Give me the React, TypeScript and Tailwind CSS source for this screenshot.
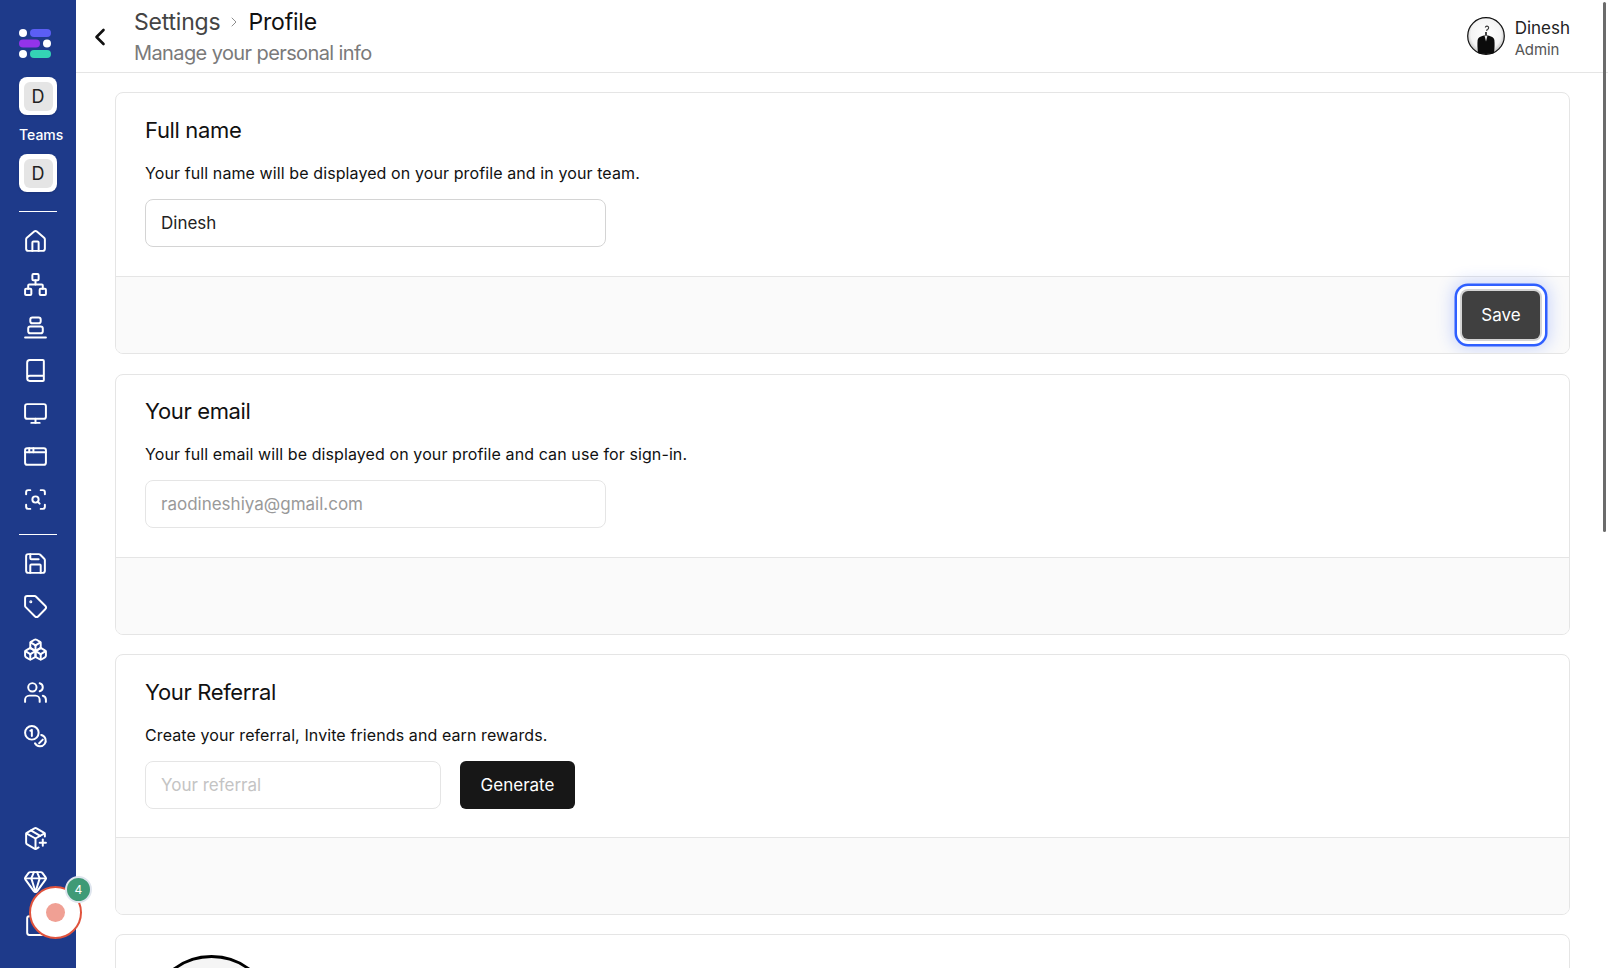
import { ReactNode } from "react";
import {
  AppWindow,
  Book,
  Boxes,
  ChevronLeft,
  ChevronRight,
  Clipboard,
  Gem,
  House,
  Monitor,
  Network,
  PackagePlus,
  Save,
  ScanSearch,
  Tag,
  Users,
} from "lucide-react";

const font = "font-['Inter','Liberation_Sans',sans-serif]";

function Logo() {
  return (
    <svg width="32" height="30" viewBox="0 0 32 30" className="ml-[19px]">
      <circle cx="4" cy="4" r="4" fill="#fff" />
      <rect x="11" y="0" width="21" height="8" rx="4" fill="#5b5ef5" />
      <rect x="0" y="10.5" width="21" height="8" rx="4" fill="#9333ea" />
      <circle cx="28" cy="14.5" r="4" fill="#fff" />
      <circle cx="4" cy="25" r="4" fill="#fff" />
      <rect x="11" y="21" width="21" height="8" rx="4" fill="#34d3b5" />
    </svg>
  );
}

function StackIcon() {
  return (
    <svg width="25" height="25" viewBox="0 0 24 24" fill="none" stroke="currentColor" strokeWidth="1.9" strokeLinecap="round">
      <rect x="7" y="2.5" width="10" height="5.5" rx="2" />
      <rect x="5" y="11" width="14" height="6.5" rx="2" />
      <path d="M2 21.5h20" />
    </svg>
  );
}

function CoinsIcon() {
  return (
    <svg width="25" height="25" viewBox="0 0 24 24" fill="none" stroke="currentColor" strokeWidth="1.9" strokeLinecap="round" strokeLinejoin="round">
      <circle cx="8.5" cy="8.5" r="6.5" />
      <path d="M7 6.5l1.5-1v6" />
      <path d="M17.5 10.500a5.500 5.500 0 1 1-6 8" />
      <path d="M19 15l-3.500 3.500" />
    </svg>
  );
}

function SuitAvatar({ className }: { className: string }) {
  return (
    <svg viewBox="0 0 38 38" className={className}>
      <defs>
        <radialGradient id="halo" cx="50%" cy="45%" r="55%">
          <stop offset="0%" stopColor="#ffffff" />
          <stop offset="75%" stopColor="#f4f4f4" />
          <stop offset="100%" stopColor="#bdbdbd" />
        </radialGradient>
      </defs>
      <circle cx="19" cy="19" r="18.3" fill="url(#halo)" stroke="#111" strokeWidth="1.2" />
      <path d="M11 36c-.5-4-.8-9-.4-13 .3-2.400 2.600-3.500 5.400-4.300l3-.7 3 .7c2.800.8 5.100 1.900 5.400 4.300.4 4 .1 9-.4 13-2.500 1.200-13.500 1.200-16 0z" fill="#0b0b0b" />
      <path d="M17.500 18.500h3l-1.500 6z" fill="#e8e8e8" />
      <path d="M18.300 10.500a1.700 1.700 0 1 1 1.900 2l-.6 1.500" fill="none" stroke="#333" strokeWidth="1.1" />
      <rect x="18" y="15" width="2" height="3.500" fill="#444" />
    </svg>
  );
}

function RailIcon({ children }: { children: ReactNode }) {
  return <div className="flex h-[43px] items-center pl-[23px]">{children}</div>;
}

function TeamButton() {
  return (
    <div className="ml-[19px] flex h-[38px] w-[38px] items-center justify-center rounded-lg bg-white shadow-sm">
      <div className="flex h-[29px] w-[29px] items-center justify-center rounded-md bg-[#e5e5e5] text-[18px] text-[#222]">D</div>
    </div>
  );
}

function Sidebar() {
  const iconProps = { size: 25, strokeWidth: 1.9 };
  return (
    <aside className="flex h-full w-[76px] shrink-0 flex-col bg-[#1e3a8a] pt-[29px] text-white">
      <Logo />
      <div className="mt-[18px]">
        <TeamButton />
      </div>
      <div className="mt-[10px] h-5 pl-[19px] text-sm leading-5 font-medium">Teams</div>
      <div className="mt-[9px]">
        <TeamButton />
      </div>
      <div className="mt-[19px] ml-[19px] h-px w-[38px] bg-white" />
      <div className="mt-[8px]">
        <RailIcon><House {...iconProps} /></RailIcon>
        <RailIcon><Network {...iconProps} /></RailIcon>
        <RailIcon><StackIcon /></RailIcon>
        <RailIcon><Book {...iconProps} /></RailIcon>
        <RailIcon><Monitor {...iconProps} /></RailIcon>
        <RailIcon><AppWindow {...iconProps} /></RailIcon>
        <RailIcon><ScanSearch {...iconProps} /></RailIcon>
      </div>
      <div className="mt-[13px] ml-[19px] h-px w-[38px] bg-white" />
      <div className="mt-[7px]">
        <RailIcon><Save {...iconProps} /></RailIcon>
        <RailIcon><Tag {...iconProps} /></RailIcon>
        <RailIcon><Boxes {...iconProps} /></RailIcon>
        <RailIcon><Users {...iconProps} /></RailIcon>
        <div className="mt-[1px]">
          <RailIcon><CoinsIcon /></RailIcon>
        </div>
      </div>
      <div className="mt-[59px]">
        <RailIcon><PackagePlus {...iconProps} /></RailIcon>
        <RailIcon><Gem {...iconProps} /></RailIcon>
        <RailIcon><Clipboard {...iconProps} /></RailIcon>
      </div>
    </aside>
  );
}

function Header() {
  return (
    <header className="flex h-[73px] shrink-0 items-center border-b border-[#e5e5e5] bg-white pr-[38px] pl-[10px]">
      <ChevronLeft size={28} strokeWidth={2.25} className="mt-[1px] text-[#111]" />
      <div className="mt-[2px] ml-[20px]">
        <div className="flex items-center text-[23px] leading-[30px] tracking-[-0.2px]">
          <span className="text-[#444]">Settings</span>
          <ChevronRight size={16} strokeWidth={1.25} className="mx-[6px] text-[#777]" />
          <span className="text-[#111]">Profile</span>
        </div>
        <div className="mt-[2px] text-[20px] leading-7 tracking-[-0.6px] text-[#7a7a7a]">Manage your personal info</div>
      </div>
      <div className="ml-auto flex items-center">
        <SuitAvatar className="h-[38px] w-[38px]" />
        <div className="mt-[3px] ml-[10px]">
          <div className="text-[17px] leading-6 text-[#222]">Dinesh</div>
          <div className="text-[15px] leading-[20px] tracking-[-0.1px] text-[#555]">Admin</div>
        </div>
      </div>
    </header>
  );
}

function Card({
  title,
  text,
  children,
  footer,
  raised,
}: {
  title: string;
  text: string;
  children: ReactNode;
  footer?: ReactNode;
  raised?: boolean;
}) {
  return (
    <section className={`overflow-hidden rounded-lg border border-[#e5e5e5] bg-white ${footer ? "mb-[20px]" : "mb-[19px]"}`}>
      <div className={`border-b border-[#e5e5e5] px-[29px] ${footer ? "h-[184px]" : "h-[183px]"} ${raised ? "pt-[20px]" : "pt-[21px]"}`}>
        <h2 className="text-[22px] leading-8 tracking-[-0.35px] text-[#111]">{title}</h2>
        <p className="mt-[15px] text-base leading-6 tracking-[0.1px] text-[#111]">{text}</p>
        <div className="mt-[14px] flex gap-[19px]">{children}</div>
      </div>
      {footer ? (
        <div className="flex h-[76px] items-center justify-end bg-[#fafafa] pr-[29px]">{footer}</div>
      ) : (
        <div className="h-[76px] bg-[#fafafa]" />
      )}
    </section>
  );
}

export default function App() {
  return (
    <div className={`relative flex h-[968px] w-full overflow-hidden bg-white ${font}`}>
      <Sidebar />
      <div className="flex h-full min-w-0 flex-1 flex-col">
        <Header />
        <main className="min-h-0 flex-1 overflow-hidden pt-[19px] pr-[38px] pl-[39px]">
          <Card
            title="Full name"
            text="Your full name will be displayed on your profile and in your team."
            footer={
              <button className="h-12 w-[78px] rounded-md bg-[#404040] pt-[2px] text-[17px] text-white shadow-[0_0_0_2px_#d4d4d4,0_0_0_5px_#ffffff,0_0_0_7.5px_#2f5fff,0_0_16px_10px_rgba(47,95,255,0.22)]">
                Save
              </button>
            }
          >
            <input
              readOnly
              value="Dinesh"
              className="h-12 w-[461px] rounded-lg border border-[#d4d4d4] px-[15px] text-[17px] text-[#222] outline-none"
            />
          </Card>
          <Card raised title="Your email" text="Your full email will be displayed on your profile and can use for sign-in.">
            <input
              readOnly
              value="raodineshiya@gmail.com"
              className="h-12 w-[461px] rounded-lg border border-[#e5e5e5] px-[15px] text-[17px] text-[#999] outline-none"
            />
          </Card>
          <Card title="Your Referral" text="Create your referral, Invite friends and earn rewards.">
            <input
              readOnly
              placeholder="Your referral"
              className="h-12 w-[296px] rounded-lg border border-[#e5e5e5] px-[15px] text-[17px] outline-none placeholder:text-[#c4c4c4]"
            />
            <button className="h-12 w-[115px] rounded-md bg-[#171717] pt-[1px] text-[17px] text-white">Generate</button>
          </Card>
          <section className="rounded-lg border border-[#e5e5e5] bg-white pt-[20px] pl-[32px]">
            <div className="h-[127px] w-[127px] rounded-full border-[3px] border-black bg-[#f5f5f5]" />
          </section>
        </main>
      </div>

      <div className="absolute top-[2px] right-[2px] h-[530px] w-[3px] rounded-full bg-[#6b6b6b]" />

      <div className="absolute top-[886px] left-[29px] flex h-[53px] w-[53px] items-center justify-center rounded-full border-2 border-[#e0533d] bg-white">
        <div className="h-[19px] w-[19px] rounded-full bg-[#f0a094]" />
      </div>
      <div className="absolute top-[876px] left-[65px] flex h-[27px] w-[27px] items-center justify-center rounded-full border-2 border-[#dfe5ee] bg-[#3f9a76] text-xs text-white">
        4
      </div>
    </div>
  );
}
